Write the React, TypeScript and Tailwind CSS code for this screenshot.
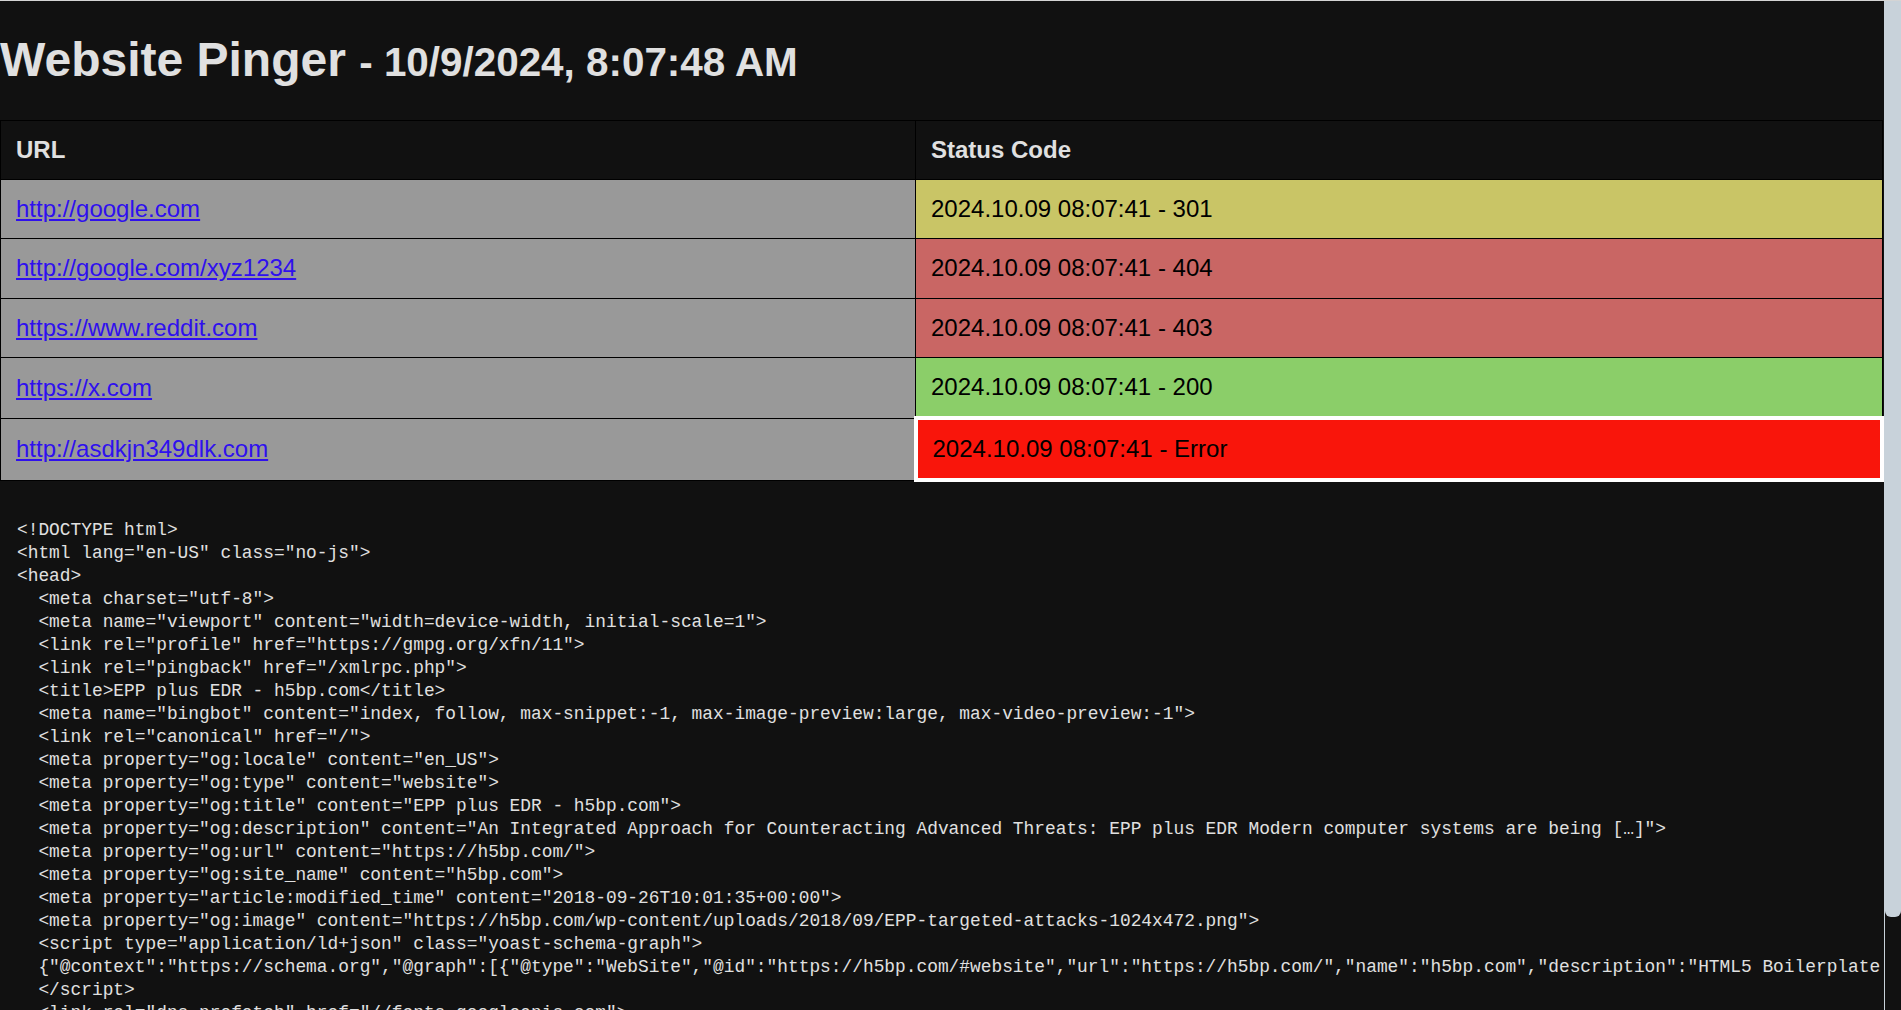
import React from "react";

const code = `<!DOCTYPE html>
<html lang="en-US" class="no-js">
<head>
  <meta charset="utf-8">
  <meta name="viewport" content="width=device-width, initial-scale=1">
  <link rel="profile" href="https://gmpg.org/xfn/11">
  <link rel="pingback" href="/xmlrpc.php">
  <title>EPP plus EDR - h5bp.com</title>
  <meta name="bingbot" content="index, follow, max-snippet:-1, max-image-preview:large, max-video-preview:-1">
  <link rel="canonical" href="/">
  <meta property="og:locale" content="en_US">
  <meta property="og:type" content="website">
  <meta property="og:title" content="EPP plus EDR - h5bp.com">
  <meta property="og:description" content="An Integrated Approach for Counteracting Advanced Threats: EPP plus EDR Modern computer systems are being […]">
  <meta property="og:url" content="https://h5bp.com/">
  <meta property="og:site_name" content="h5bp.com">
  <meta property="article:modified_time" content="2018-09-26T10:01:35+00:00">
  <meta property="og:image" content="https://h5bp.com/wp-content/uploads/2018/09/EPP-targeted-attacks-1024x472.png">
  <script type="application/ld+json" class="yoast-schema-graph">
  {"@context":"https://schema.org","@graph":[{"@type":"WebSite","@id":"https://h5bp.com/#website","url":"https://h5bp.com/","name":"h5bp.com","description":"HTML5 Boilerplate Theme","publisher":{"@id":"https://h5bp.com/#organization"},"inLanguage":"en-US"}]}
  </script>
  <link rel="dns-prefetch" href="//fonts.googleapis.com">
  <link rel="dns-prefetch" href="//s.w.org">`;

type Row = { url: string; status: string; cls: string };

const rows: Row[] = [
  { url: "http://google.com", status: "2024.10.09 08:07:41 - 301", cls: "bg-[#c9c566]" },
  { url: "http://google.com/xyz1234", status: "2024.10.09 08:07:41 - 404", cls: "bg-[#c96664]" },
  { url: "https://www.reddit.com", status: "2024.10.09 08:07:41 - 403", cls: "bg-[#c96664]" },
  { url: "https://x.com", status: "2024.10.09 08:07:41 - 200", cls: "bg-[#8bce69]" },
  {
    url: "http://asdkjn349dlk.com",
    status: "2024.10.09 08:07:41 - Error",
    cls: "bg-[#f9150b] border-4 border-white",
  },
];

export default function App() {
  return (
    <div className="flex h-[1010px] w-[1901px] flex-col overflow-hidden bg-[#111111] font-['Liberation_Sans',Arial,sans-serif]">
      <div className="h-px w-full shrink-0 bg-[#d4d4d4]" />
      <div className="flex min-h-0 flex-1">
        <main className="min-w-0 flex-1 overflow-hidden">
          <h1 className="mt-8 mb-[33px] text-[48px] font-bold leading-[54px] text-[#e0e0e0]">
            Website Pinger <span className="text-[40.4px] leading-[40px]">- 10/9/2024, 8:07:48 AM</span>
          </h1>
          <table className="w-full table-fixed border-collapse border border-black text-[24px] leading-[28.2px]">
            <colgroup>
              <col className="w-[915px]" />
              <col />
            </colgroup>
            <thead>
              <tr>
                <th className="border border-black p-[15px] text-left font-bold text-[#e0e0e0]">URL</th>
                <th className="border border-black p-[15px] text-left font-bold text-[#e0e0e0]">Status Code</th>
              </tr>
            </thead>
            <tbody>
              {rows.map((r) => (
                <tr key={r.url}>
                  <td className="border border-black bg-[#999999] p-[15px]">
                    <a href="#" className="text-[#2f10ee] underline">
                      {r.url}
                    </a>
                  </td>
                  <td className={`border border-black p-[15px] text-black ${r.cls}`}>{r.status}</td>
                </tr>
              ))}
            </tbody>
          </table>
          <pre className="overflow-hidden px-[17px] pt-[37px] font-['Liberation_Mono',monospace] text-[17.85px] leading-[23px] text-[#e0e0e0]">
            {code}
          </pre>
        </main>
        <div className="flex w-[17px] shrink-0 flex-col border-l border-[#c8d2da] bg-[#111111]">
          <div className="h-[916px] w-full rounded-b-[6px] bg-[#c8d2da]" />
        </div>
      </div>
    </div>
  );
}
